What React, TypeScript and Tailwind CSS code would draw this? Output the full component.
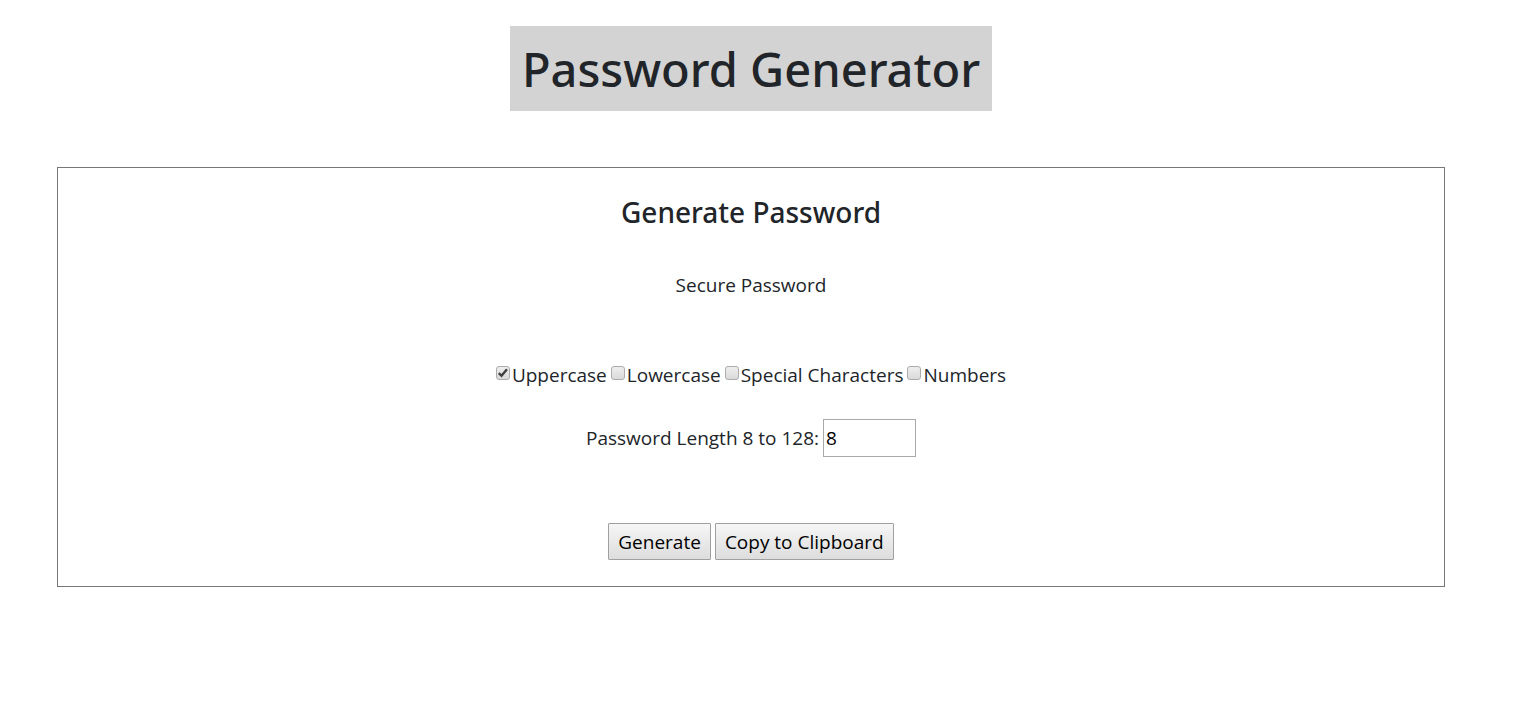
import { useState } from "react";

const kinds = ["Uppercase", "Lowercase", "Special Characters", "Numbers"];

export default function App() {
  const [checked, setChecked] = useState<string[]>(["Uppercase"]);
  const [length, setLength] = useState("8");
  const toggle = (kind: string) =>
    setChecked((c) => (c.includes(kind) ? c.filter((k) => k !== kind) : [...c, kind]));

  return (
    <main className="flex flex-col pt-[26px] pr-20 pl-[57px] font-['Open_Sans','Noto_Sans',sans-serif] text-[19px] text-[#212529]">
      <h1 className="self-center bg-[#d3d3d3] px-3 pt-[13px] pb-[11px] font-['Noto_Sans','Open_Sans',sans-serif] text-[47px] leading-[61px] font-medium">Password Generator</h1>
      <section className="mt-14 flex flex-col items-center border border-[#777777] pt-6 pb-[26px]">
        <h2 className="font-['Noto_Sans','Open_Sans',sans-serif] text-[28px] leading-10 font-medium">Generate Password</h2>
        <p className="mt-[39px] leading-7">Secure Password</p>
        <div className="mt-[62px] flex gap-1">
          {kinds.map((kind) => (
            <label key={kind} className="flex items-center gap-0.5 leading-7">
              <span className="grid pb-1">
                <input
                  type="checkbox"
                  checked={checked.includes(kind)}
                  onChange={() => toggle(kind)}
                  className="col-start-1 row-start-1 size-3.5 appearance-none rounded-[3px] border border-[#acacac] bg-linear-to-b from-[#eeeeee] to-[#dadada]"
                />
                {checked.includes(kind) && (
                  <svg viewBox="0 0 14 14" className="pointer-events-none col-start-1 row-start-1 size-3.5" aria-hidden="true">
                    <path d="M2.8 7.2 5.5 9.8 11 3.2" fill="none" stroke="#404040" strokeWidth="2.4" />
                  </svg>
                )}
              </span>
              {kind}
            </label>
          ))}
        </div>
        <div className="mt-[30px] flex items-center gap-1">
          <label htmlFor="length">Password Length 8 to 128:</label>
          <input
            id="length"
            type="text"
            inputMode="numeric"
            value={length}
            onChange={(e) => setLength(e.target.value)}
            className="h-[38px] w-[93px] border border-[#a9a9a9] px-0.5 text-black"
          />
        </div>
        <div className="mt-[66px] flex gap-1 text-black">
          <button type="button" className="h-[37px] rounded-[1px] border border-[#a0a0a0] bg-linear-to-b from-[#f6f6f6] to-[#dddddd] px-[9px] pt-0.5">
            Generate
          </button>
          <button type="button" className="h-[37px] rounded-[1px] border border-[#a0a0a0] bg-linear-to-b from-[#f6f6f6] to-[#dddddd] px-[9px] pt-0.5">
            Copy to Clipboard
          </button>
        </div>
      </section>
    </main>
  );
}
